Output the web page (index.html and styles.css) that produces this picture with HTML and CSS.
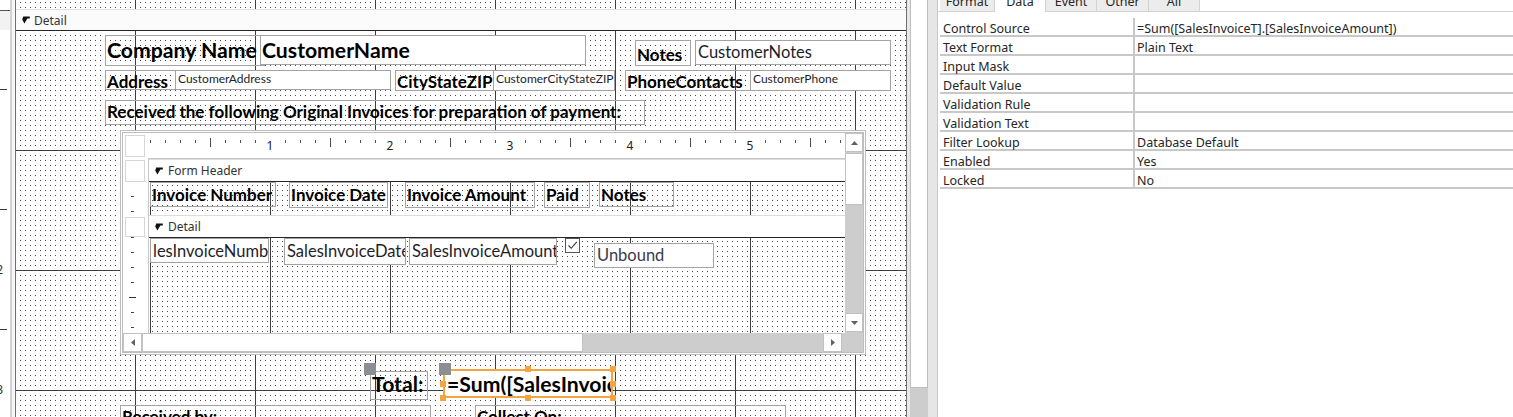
FILE: index.html
```html
<!DOCTYPE html>
<html lang="en">
<head>
<meta charset="utf-8">
<title>Form Design</title>
<link rel="stylesheet" href="styles.css">
</head>
<body>
<div class="app">
  <div class="vruler">
    <div class="vr-sel"></div>
    <div class="vr-nums">
      <div class="vr-num"></div>
      <div class="vr-num">2</div>
      <div class="vr-num">3</div>
    </div>
  </div>
  <div class="vr-edge"></div>
  <div class="vr-gap"></div>

  <div class="canvas">
    <div class="sec-tail grid"></div>
    <div class="sec-bar">
      <svg class="sec-ico" width="8" height="8" viewBox="0 0 8 8"><path d="M1.2 0.6 H7.8 V2.4 H5.4 L2.4 7.6 L0.2 3.4 Z" fill="#111"/></svg>
      <span>Detail</span>
    </div>
    <div class="sec-body grid">
      <div class="ctl lbl xl" style="left:89px;top:4px;width:160px;height:31px"><span class="cap">Company Name</span></div>
      <div class="ctl txt xl" style="left:244px;top:4px;width:326px;height:30px"><span class="cap">CustomerName</span></div>

      <div class="ctl lbl md low" style="left:89px;top:39px;width:71px;height:20px"><span class="cap">Address</span></div>
      <div class="ctl txt sm" style="left:159px;top:39px;width:216px;height:20px"><span class="cap">CustomerAddress</span></div>

      <div class="ctl lbl md low" style="left:379px;top:39px;width:99px;height:21px"><span class="cap">CityStateZIP</span></div>
      <div class="ctl txt sm" style="left:477px;top:39px;width:122px;height:21px"><span class="cap">CustomerCityStateZIP</span></div>

      <div class="ctl lbl md low" style="left:619px;top:9px;width:56px;height:26px"><span class="cap notes">Notes</span></div>
      <div class="ctl txt lg" style="left:679px;top:9px;width:196px;height:25px"><span class="cap">CustomerNotes</span></div>

      <div class="ctl lbl md low" style="left:609px;top:39px;width:126px;height:21px"><span class="cap">PhoneContacts</span></div>
      <div class="ctl txt sm" style="left:734px;top:39px;width:141px;height:21px"><span class="cap">CustomerPhone</span></div>

      <div class="ctl lbl md" style="left:89px;top:69px;width:540px;height:25px"><span class="cap">Received the following Original Invoices for preparation of payment:</span></div>

      <div class="subform" style="left:104px;top:99px">
        <div class="sf-corner"><div class="sf-box"></div></div>
        <div class="sf-ruler">
          <div class="sf-nums">
            <div class="sf-num"><span>1</span></div>
            <div class="sf-num"><span>2</span></div>
            <div class="sf-num"><span>3</span></div>
            <div class="sf-num"><span>4</span></div>
            <div class="sf-num"><span>5</span></div>
          </div>
        </div>
        <div class="sf-vscroll">
          <div class="sbtn"><svg width="7" height="4" viewBox="0 0 7 4"><path d="M0 4 L3.5 0 L7 4 Z" fill="#606060"/></svg></div>
          <div class="sthumb-v"></div>
          <div class="sfill"></div>
          <div class="sbtn sbtn-last"><svg width="7" height="4" viewBox="0 0 7 4"><path d="M0 0 L7 0 L3.5 4 Z" fill="#606060"/></svg></div>
        </div>
        <div class="sf-vruler">
          <div class="sf-sel first"></div>
          <div class="sf-ticks fh"></div>
          <div class="sf-sel second"></div>
          <div class="sf-ticks dt"></div>
        </div>
        <div class="sf-main">
          <div class="sbar">
            <svg class="sec-ico" width="8" height="8" viewBox="0 0 8 8"><path d="M1.2 0.6 H7.8 V2.4 H5.4 L2.4 7.6 L0.2 3.4 Z" fill="#111"/></svg>
            <span>Form Header</span>
          </div>
          <div class="sbody fhbody grid2">
            <div class="ctl lbl sb" style="left:1px;top:0;width:126px;height:25px"><span class="cap">Invoice Number</span></div>
            <div class="ctl lbl sb" style="left:140px;top:0;width:99px;height:26px"><span class="cap">Invoice Date</span></div>
            <div class="ctl lbl sb" style="left:256px;top:0;width:130px;height:26px"><span class="cap">Invoice Amount</span></div>
            <div class="ctl lbl sb" style="left:395px;top:0;width:46px;height:26px"><span class="cap">Paid</span></div>
            <div class="ctl lbl sb" style="left:450px;top:0;width:75px;height:25px"><span class="cap">Notes</span></div>
          </div>
          <div class="sbar">
            <svg class="sec-ico" width="8" height="8" viewBox="0 0 8 8"><path d="M1.2 0.6 H7.8 V2.4 H5.4 L2.4 7.6 L0.2 3.4 Z" fill="#111"/></svg>
            <span>Detail</span>
          </div>
          <div class="sbody dtbody grid2">
            <div class="ctl txt st" style="left:1px;top:0;width:119px;height:25px"><span class="cap">lesInvoiceNumb</span></div>
            <div class="ctl txt st" style="left:135px;top:0;width:122px;height:27px"><span class="cap">SalesInvoiceDate</span></div>
            <div class="ctl txt st" style="left:260px;top:0;width:148px;height:27px"><span class="cap">SalesInvoiceAmount</span></div>
            <div class="chk" style="left:416px;top:0"><svg width="13" height="13" viewBox="0 0 13 13"><path d="M2.5 6.5 L5.2 9.3 L10.8 2.8" fill="none" stroke="#333" stroke-width="1.1"/></svg></div>
            <div class="ctl txt st un" style="left:445px;top:5px;width:120px;height:25px"><span class="cap">Unbound</span></div>
          </div>
        </div>
        <div class="sf-hscroll">
          <div class="sbtn h"><svg width="4" height="7" viewBox="0 0 4 7"><path d="M4 0 L0 3.5 L4 7 Z" fill="#606060"/></svg></div>
          <div class="sthumb-h"></div>
          <div class="sfill"></div>
          <div class="sbtn h last"><svg width="4" height="7" viewBox="0 0 4 7"><path d="M0 0 L4 3.5 L0 7 Z" fill="#606060"/></svg></div>
        </div>
        <div class="sf-corner2"></div>
      </div>

      <div class="ctl lbl xl tot" style="left:354px;top:340px;width:58px;height:29px">
        <span class="cap">Total:</span>
        <i class="mv" style="left:-7px;top:-9px"></i>
      </div>
      <div class="ctl txt xl sel" style="left:427px;top:338px;width:170px;height:29px">
        <span class="cap">=Sum([SalesInvoiceT].[SalesInvoiceAmount])</span>
        <i class="hd" style="left:80px;top:-5px"></i>
        <i class="hd" style="left:165px;top:-5px"></i>
        <i class="hd" style="left:165px;top:10px"></i>
        <i class="hd" style="left:165px;top:24px"></i>
        <i class="hd" style="left:80px;top:24px"></i>
        <i class="hd" style="left:-5px;top:24px"></i>
        <i class="hd" style="left:-5px;top:10px"></i>
        <i class="mv" style="left:-6px;top:-8px"></i>
      </div>

      <div class="ctl lbl md" style="left:104px;top:374px;width:311px;height:40px"><span class="cap">Received by:</span></div>
      <div class="ctl lbl md" style="left:459px;top:374px;width:311px;height:40px"><span class="cap">Collect On:</span></div>
    </div>
  </div>

  <div class="mscroll-gap"></div>
  <div class="mscroll"><div class="mthumb"></div></div>
  <div class="msplit"></div>

  <div class="props">
    <div class="tabs">
      <div class="tab" style="width:55px">Format</div>
      <div class="tab on" style="width:51px">Data</div>
      <div class="tab" style="width:51px">Event</div>
      <div class="tab" style="width:52px">Other</div>
      <div class="tab" style="width:51px">All</div>
    </div>
    <div class="pgrid">
      <div class="prow"><div class="pk">Control Source</div><div class="pv">=Sum([SalesInvoiceT].[SalesInvoiceAmount])</div></div>
      <div class="prow"><div class="pk">Text Format</div><div class="pv">Plain Text</div></div>
      <div class="prow"><div class="pk">Input Mask</div><div class="pv"></div></div>
      <div class="prow"><div class="pk">Default Value</div><div class="pv"></div></div>
      <div class="prow"><div class="pk">Validation Rule</div><div class="pv"></div></div>
      <div class="prow"><div class="pk">Validation Text</div><div class="pv"></div></div>
      <div class="prow"><div class="pk">Filter Lookup</div><div class="pv">Database Default</div></div>
      <div class="prow"><div class="pk">Enabled</div><div class="pv">Yes</div></div>
      <div class="prow"><div class="pk">Locked</div><div class="pv">No</div></div>
    </div>
  </div>
</div>
</body>
</html>
```
FILE: styles.css
```css
* { box-sizing: border-box; }
html, body { margin: 0; padding: 0; }
body {
  width: 1513px;
  height: 417px;
  overflow: hidden;
  background: #fff;
  font-family: "Lato", "Liberation Sans", sans-serif;
  color: #000;
}
.app { display: flex; height: 417px; overflow: hidden; }

/* left vertical ruler */
.vruler {
  width: 10px;
  flex: none;
  overflow: hidden;
  background-color: #fff;
  background-image: linear-gradient(to bottom, #3a3a3a 1px, transparent 1px);
  background-size: 7px 120px;
  background-position: 0 89px;
  background-repeat: repeat-y;
}
.vr-sel { margin-top: 10px; height: 20px; background: #f2f2f2; border-top: 1px solid #555; }
.vr-nums { margin-top: 112px; }
.vr-num {
  height: 120px;
  display: flex;
  justify-content: flex-end;
  padding-right: 7px;
  font: 12px/16px "Noto Sans", sans-serif;
  color: #333;
}
.vr-edge { width: 2px; flex: none; background: #d2d2d2; }
.vr-gap { width: 3px; flex: none; background: #f7f7f7; }

/* design canvas */
.canvas {
  width: 892px;
  flex: none;
  border-left: 1px solid #707070;
  border-right: 1px solid #707070;
  display: flex;
  flex-direction: column;
}
.grid {
  background-color: #fff;
  background-image:
    linear-gradient(to right, #3d3d3d 1px, transparent 1px),
    linear-gradient(to bottom, #3d3d3d 1px, transparent 1px),
    conic-gradient(at 1px 1px, transparent 75%, #4a4a4a 0);
  background-size: 120px 100%, 100% 120px, 5px 5px;
}
.sec-tail { height: 9px; flex: none; background-position: 119px 0, 0 60px, 4px 2px; }
.sec-bar {
  height: 22px;
  flex: none;
  background: #fbfbfb;
  border-top: 1px solid #dedede;
  border-bottom: 1px solid #262626;
  display: flex;
  align-items: center;
  gap: 4px;
  padding-left: 6px;
  font: 12px "Noto Sans", sans-serif;
  color: #333;
}
.sec-ico { flex: none; }
.sec-body { flex: 1; position: relative; background-position: 119px 0, 0 119px, 4px 4px; }

/* controls */
.ctl { position: absolute; border: 1px solid #a3a3a3; }
.cap { display: block; height: 100%; overflow: hidden; white-space: nowrap; padding-left: 1px; }
.lbl { background: transparent; font-weight: 700; }
.txt { background: #fff; }
.xl { font-size: 21.2px; line-height: 29px; font-weight: 700; }
.md { font-size: 17px; line-height: 22px; }
.low .cap { padding-top: 1px; line-height: 20px; }
.low .cap.notes { padding-top: 3px; line-height: 22px; }
.sm .cap { font-size: 12px; line-height: 16px; padding-left: 2px; color: #1e1e2a; }
.lg .cap { font-size: 16.5px; line-height: 23px; padding-left: 2px; color: #1e1e2a; }
.tot .cap { line-height: 25px; }
.sel { border: 2px solid #f6a440; }
.sel .cap { line-height: 27px; padding-left: 2px; }
.hd { position: absolute; width: 6px; height: 6px; background: #f6a440; }
.mv { position: absolute; width: 12px; height: 12px; background: #8b8e93; }

/* subform */
.subform {
  position: absolute;
  width: 746px;
  height: 225px;
  border: 3px double #bdbdbd;
  background: #fff;
  display: grid;
  grid-template-columns: 25px 697px 18px;
  grid-template-rows: 26px 174px 19px;
}
.sf-corner { grid-column: 1; grid-row: 1; }
.sf-box { margin: 2px 0 0 2px; width: 20px; height: 22px; border: 1px solid #d6d6d6; }
.sf-ruler {
  grid-column: 2;
  grid-row: 1;
  border-bottom: 1px solid #c6c6c6;
  background-image:
    linear-gradient(to right, #555 1px, transparent 1px),
    linear-gradient(to right, #444 1px, transparent 1px);
  background-size: 15px 3px, 120px 9px;
  background-position: 2px 7px, 62px 5px;
  background-repeat: repeat-x;
}
.sf-nums { display: flex; padding-left: 62px; padding-top: 6px; }
.sf-num { width: 120px; flex: none; text-align: center; font: 12px/14px "Noto Sans", sans-serif; color: #222; }
.sf-num span { background: #fff; padding: 0 2px; }

.sf-vscroll {
  grid-column: 3;
  grid-row: 1 / 3;
  background: #cdcdcd;
  display: flex;
  flex-direction: column;
}
.sbtn {
  width: 18px;
  height: 19px;
  flex: none;
  background: #fff;
  border: 1px solid #c2c2c2;
  display: flex;
  align-items: center;
  justify-content: center;
}
.sbtn-last { margin-bottom: 1px; }
.sthumb-v { height: 52px; margin-top: 1px; flex: none; background: #fff; border: 1px solid #c2c2c2; }
.sfill { flex: 1; }

.sf-vruler { grid-column: 1; grid-row: 2; display: flex; flex-direction: column; }
.sf-sel { width: 20px; margin-left: 2px; border: 1px solid #d6d6d6; flex: none; }
.sf-sel.first { margin-top: 1px; height: 22px; }
.sf-sel.second { margin-top: 2px; height: 20px; }
.sf-ticks {
  background-image: linear-gradient(to bottom, #444 1px, transparent 1px);
  background-size: 3px 15px;
  background-repeat: repeat-y;
}
.sf-ticks.fh { height: 33px; flex: none; background-position: 8px 14px; }
.sf-ticks.dt {
  flex: 1;
  background-image:
    linear-gradient(#333, #333),
    linear-gradient(to bottom, #444 1px, transparent 1px);
  background-size: 7px 1px, 3px 15px;
  background-position: 6px 60px, 8px 15px;
  background-repeat: no-repeat, repeat-y;
}

.sf-main { grid-column: 2; grid-row: 2; display: flex; flex-direction: column; border-left: 1px solid #c8c8c8; }
.sbar {
  height: 23px;
  flex: none;
  background: #fff;
  border-top: 1px solid #dcdcdc;
  border-bottom: 1px solid #262626;
  display: flex;
  align-items: center;
  gap: 5px;
  padding-left: 6px;
  font: 12px "Noto Sans", sans-serif;
  color: #333;
}
.grid2 {
  background-color: #fff;
  background-image:
    linear-gradient(to right, #3d3d3d 1px, transparent 1px),
    conic-gradient(at 1px 1px, transparent 75%, #4a4a4a 0);
  background-size: 120px 100%, 5px 5px;
  background-position: 1px 0, 3px 3px;
}
.sbody { position: relative; }
.fhbody { height: 33px; flex: none; }
.dtbody { flex: 1; }
.sb { font-size: 17px; line-height: 24px; }
.st .cap { font-size: 16.5px; line-height: 25px; padding-left: 2px; color: #1e1e2a; }
.un .cap { line-height: 23px; color: #3a3a4a; }
.chk { position: absolute; width: 15px; height: 15px; border: 1px solid #555; background: #fff; }
.chk svg { display: block; }

.sf-hscroll {
  grid-column: 1 / 3;
  grid-row: 3;
  background: #cdcdcd;
  display: flex;
}
.sbtn.h { width: 19px; height: 19px; }
.sbtn.h.last { margin-right: 3px; }
.sthumb-h { width: 441px; flex: none; background: #fff; border: 1px solid #c2c2c2; }
.sf-corner2 { grid-column: 3; grid-row: 3; background: #cdcdcd; }

/* main scroll + splitter */
.mscroll-gap { width: 3px; flex: none; background: #e8e8e8; }
.mscroll { width: 18px; flex: none; background: #cdcdcd; display: flex; flex-direction: column; }
.mthumb { height: 388px; flex: none; background: #fff; border: 1px solid #bdbdbd; border-top: none; }
.msplit { width: 10px; flex: none; background: #e6e6e6; border-right: 1px solid #c9c9c9; }

/* property sheet */
.props { width: 575px; flex: none; font: 12.5px "Noto Sans", sans-serif; color: #262626; background: #fff; }
.tabs { height: 12px; display: flex; padding-left: 2px; border-bottom: 1px solid #d2d2d2; }
.tab {
  height: 11px;
  flex: none;
  background: #ececec;
  border-right: 1px solid #d2d2d2;
  text-align: center;
  line-height: 4px;
  overflow: hidden;
}
.tab.on { background: #fff; height: 12px; }
.pgrid { margin-top: 6px; padding-left: 2px; }
.prow { display: flex; height: 19px; border-bottom: 2px solid #c8c8c8; }
.pk { width: 195px; flex: none; border-right: 2px solid #c8c8c8; padding: 3px 0 0 3px; line-height: 16px; white-space: nowrap; }
.pv { padding: 3px 0 0 2px; line-height: 16px; white-space: nowrap; }
```
